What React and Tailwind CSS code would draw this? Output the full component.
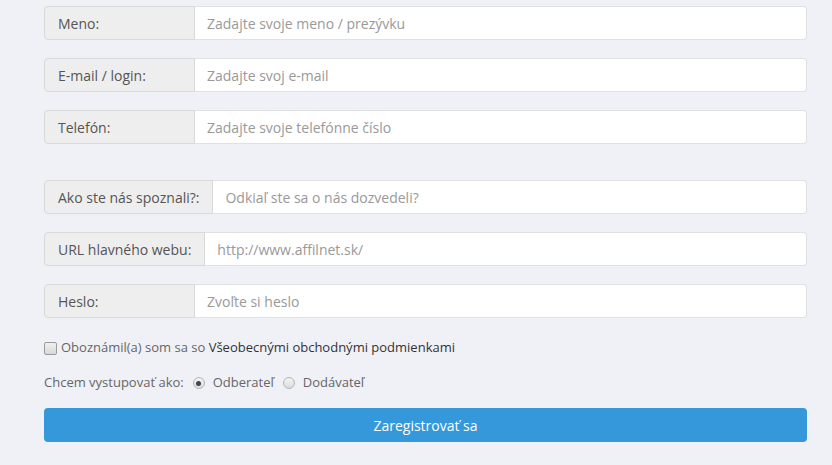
import { useState } from 'react'

const fields = [
  { label: 'Meno:', placeholder: 'Zadajte svoje meno / prezývku', type: 'text' },
  { label: 'E-mail / login:', placeholder: 'Zadajte svoj e-mail', type: 'email' },
  { label: 'Telefón:', placeholder: 'Zadajte svoje telefónne číslo', type: 'tel' },
]

const extraFields = [
  { label: 'Ako ste nás spoznali?:', placeholder: 'Odkiaľ ste sa o nás dozvedeli?', type: 'text' },
  { label: 'URL hlavného webu:', placeholder: 'http://www.affilnet.sk/', type: 'url' },
  { label: 'Heslo:', placeholder: 'Zvoľte si heslo', type: 'password' },
]

function InputGroup({ label, placeholder, type }) {
  return (
    <div className="flex h-[34px]">
      <span className="flex items-center min-w-[151px] px-[13px] bg-[#eeeeee] border border-[#d9d9d9] rounded-l-[4px] text-[#555] whitespace-nowrap">
        {label}
      </span>
      <input
        type={type}
        placeholder={placeholder}
        className="flex-1 min-w-0 px-3 bg-white border border-l-0 border-[#e0e0e0] rounded-r-[4px] text-[#555] placeholder:text-[#999] outline-none"
      />
    </div>
  )
}

function Radio({ checked, onClick, children }) {
  return (
    <label className="flex items-center gap-2 cursor-pointer" onClick={onClick}>
      <span className="w-[12px] h-[12px] rounded-full border border-[#b5b5b5] bg-gradient-to-b from-[#f4f4f4] to-[#dcdcdc] flex items-center justify-center">
        {checked && <span className="w-[5px] h-[5px] rounded-full bg-[#444]" />}
      </span>
      <span className="text-[#666]">{children}</span>
    </label>
  )
}

export default function App() {
  const [agreed, setAgreed] = useState(false)
  const [role, setRole] = useState('odberatel')

  return (
    <div className="min-h-[465px] bg-[#f0f1f6] font-['Open_Sans',sans-serif] text-[14px]">
      <form className="ml-[44px] mr-[25px] pt-[6px]" onSubmit={(e) => e.preventDefault()}>
        <div className="flex flex-col gap-[18px]">
          {fields.map((f) => (
            <InputGroup key={f.label} {...f} />
          ))}
        </div>

        <div className="flex flex-col gap-[18px] mt-[36px]">
          {extraFields.map((f) => (
            <InputGroup key={f.label} {...f} />
          ))}
        </div>

        {/* Terms */}
        <label className="flex items-center gap-[4px] mt-[20px] h-[20px] text-[13px] cursor-pointer" onClick={() => setAgreed(!agreed)}>
          <span className="w-[13px] h-[13px] rounded-[2px] border border-[#9a9a9a] bg-gradient-to-b from-[#f0f0f0] to-[#d8d8d8] flex items-center justify-center text-[10px] leading-none text-[#333]">
            {agreed ? '✓' : ''}
          </span>
          <span className="text-[#666]">
            Oboznámil(a) som sa so <span className="text-[#333]">Všeobecnými obchodnými podmienkami</span>
          </span>
        </label>

        {/* Role */}
        <div className="flex items-center gap-[9px] mt-[15px] h-[20px] text-[13px]">
          <span className="text-[#666]">Chcem vystupovať ako:</span>
          <Radio checked={role === 'odberatel'} onClick={() => setRole('odberatel')}>Odberateľ</Radio>
          <Radio checked={role === 'dodavatel'} onClick={() => setRole('dodavatel')}>Dodávateľ</Radio>
        </div>

        <button
          type="submit"
          className="w-full h-[34px] mt-[15px] bg-[#3498db] text-white rounded-[4px] hover:bg-[#2e8ece]"
        >
          Zaregistrovať sa
        </button>
      </form>
    </div>
  )
}
